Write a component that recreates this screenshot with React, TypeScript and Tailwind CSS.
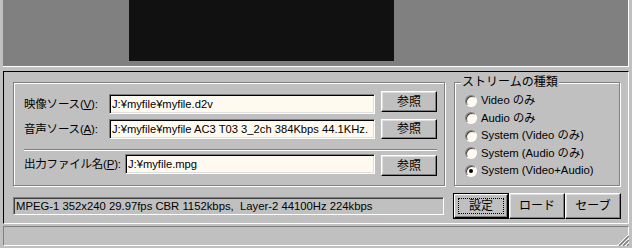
const font = "font-['Liberation_Sans','Noto_Sans_CJK_JP',sans-serif]";

function TextBox({ value, width }: { value: string; width: string }) {
  return (
    <div
      className={`${width} h-[20px] shrink-0 overflow-hidden whitespace-nowrap bg-[#fffaf0] border border-t-[#808080] border-l-[#808080] border-r-white border-b-white shadow-[inset_1px_1px_0_#000,inset_-1px_-1px_0_#dfdfdf] pl-[2px] text-[11.2px] leading-[18px] text-black`}
    >
      {value}
    </div>
  );
}

function Button({ label, h = 'h-[21px]' }: { label: string; h?: string }) {
  return (
    <div
      className={`w-[56px] ${h} shrink-0 flex items-center justify-center bg-[#c0c0c0] border border-t-white border-l-white border-r-black border-b-black shadow-[inset_-1px_-1px_0_#808080,inset_1px_1px_0_#dfdfdf] text-[12px] text-black`}
    >
      {label}
    </div>
  );
}

function Radio({ label, checked }: { label: string; checked?: boolean }) {
  return (
    <div className="h-[17.5px] flex items-center gap-[4px]">
      <div className="w-[12px] h-[12px] rounded-full bg-[#fffaf0] border border-t-[#808080] border-l-[#808080] border-r-white border-b-white shadow-[inset_1px_1px_0_#404040] flex items-center justify-center">
        {checked && <div className="w-[4px] h-[4px] rounded-full bg-black" />}
      </div>
      <span className="text-[11.3px] text-black whitespace-nowrap">{label}</span>
    </div>
  );
}

export default function App() {
  return (
    <div className={`w-[632px] h-[248px] bg-[#c0c0c0] overflow-hidden flex flex-col ${font}`}>
      {/* preview */}
      <div className="ml-[3px] w-[626px] h-[67px] bg-[#808080] border-r border-b border-white">
        <div className="ml-[126px] w-[265px] h-[61px] bg-[#111111]" />
      </div>

      {/* main panel */}
      <div className="ml-[3px] mt-[4px] w-[626px] border border-t-black border-l-black border-r-white border-b-white pt-[10px] pl-[9px] pb-[4px]">
        <div className="flex gap-[9px]">
          {/* file group */}
          <div className="w-[432px] h-[104px] border border-[#808080] shadow-[inset_1px_1px_0_#fff,1px_1px_0_#fff] pl-[10px] pr-[7px] pt-[8px] flex flex-col">
            <div className="flex items-start">
              <span className="w-[85px] mt-[5px] text-[11.5px] tracking-[-0.2px] leading-[16px] text-black whitespace-nowrap">
                映像ソース(<u>V</u>):
              </span>
              <div className="mt-[3px]">
                <TextBox width="w-[266px]" value="J:¥myfile¥myfile.d2v" />
              </div>
              <div className="ml-[6px]">
                <Button label="参照" />
              </div>
            </div>
            <div className="flex items-start mt-[5px]">
              <span className="w-[85px] mt-[2px] text-[11.5px] tracking-[-0.2px] leading-[16px] text-black whitespace-nowrap">
                音声ソース(<u>A</u>):
              </span>
              <TextBox width="w-[266px]" value="J:¥myfile¥myfile AC3 T03 3_2ch 384Kbps 44.1KHz." />
              <div className="ml-[6px]">
                <Button label="参照" h="h-[20px]" />
              </div>
            </div>
            <div className="mt-[10px] h-[2px] border-t border-[#808080] border-b border-b-white" />
            <div className="flex items-start mt-[3px]">
              <span className="w-[101px] mt-[2px] text-[11.5px] tracking-[-0.2px] leading-[16px] text-black whitespace-nowrap">
                出力ファイル名(<u>P</u>):
              </span>
              <TextBox width="w-[250px]" value="J:¥myfile.mpg" />
              <div className="ml-[6px] mt-[1px]">
                <Button label="参照" />
              </div>
            </div>
          </div>

          {/* stream type group */}
          <div className="relative w-[166px] h-[104px] border border-[#808080] shadow-[inset_1px_1px_0_#fff,1px_1px_0_#fff] pl-[10px] pt-[9px]">
            <span className="absolute left-[6px] -top-[9px] px-[1px] bg-[#c0c0c0] text-[12px] leading-[16px] text-black whitespace-nowrap">
              ストリームの種類
            </span>
            <Radio label="Video のみ" />
            <Radio label="Audio のみ" />
            <Radio label="System (Video のみ)" />
            <Radio label="System (Audio のみ)" />
            <Radio label="System (Video+Audio)" checked />
          </div>
        </div>

        {/* info + actions */}
        <div className="flex items-start mt-[7px]">
          <div className="w-[431px] h-[18px] mt-[4px] overflow-hidden whitespace-nowrap border border-t-[#808080] border-l-[#808080] border-r-white border-b-white shadow-[inset_1px_1px_0_#404040] pl-[2px] text-[11.3px] leading-[16px] text-black">
            MPEG-1 352x240 29.97fps CBR 1152kbps,&nbsp; Layer-2 44100Hz 224kbps
          </div>
          <div className="ml-[9px] flex">
            <div className="w-[56px] h-[26px] border border-black">
              <div className="w-full h-full flex items-center justify-center p-[3px] border border-t-white border-l-white border-r-black border-b-black shadow-[inset_-1px_-1px_0_#808080]">
                <div className="w-full h-full flex items-center justify-center border border-dotted border-black text-[12px] text-black">
                  設定
                </div>
              </div>
            </div>
            <Button label="ロード" h="h-[26px]" />
            <Button label="セーブ" h="h-[26px]" />
          </div>
        </div>
      </div>

      {/* status bar */}
      <div className="ml-[3px] mt-[2px] w-[626px] h-[20px] border border-t-[#808080] border-l-[#808080] border-r-white border-b-white flex justify-end items-end">
        <svg width="12" height="12" viewBox="0 0 12 12" className="mb-[-1px] mr-[-1px]">
          <line x1="11" y1="1" x2="1" y2="11" stroke="#fff" />
          <line x1="12" y1="2" x2="2" y2="12" stroke="#808080" strokeWidth="1.5" />
          <line x1="11" y1="5" x2="5" y2="11" stroke="#fff" />
          <line x1="12" y1="6" x2="6" y2="12" stroke="#808080" strokeWidth="1.5" />
          <line x1="11" y1="9" x2="9" y2="11" stroke="#fff" />
          <line x1="12" y1="10" x2="10" y2="12" stroke="#808080" strokeWidth="1.5" />
        </svg>
      </div>
    </div>
  );
}
